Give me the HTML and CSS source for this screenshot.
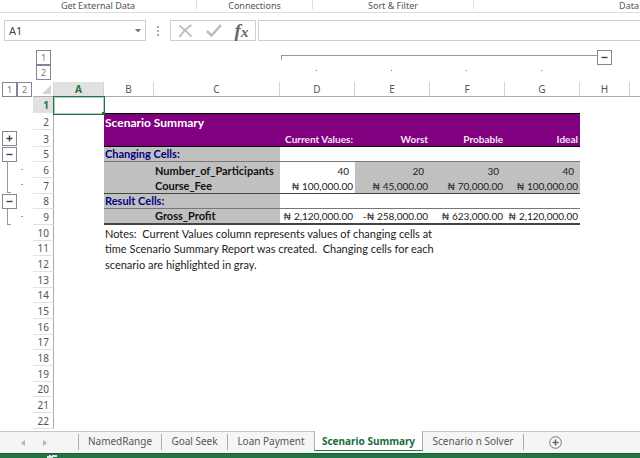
FILE: index.html
```html
<!DOCTYPE html>
<html lang="en">
<head>
<meta charset="utf-8">
<title>Scenario Summary</title>
<link rel="stylesheet" href="styles.css">
</head>
<body>
<div class="app">
  <header class="ribbon">
    <span class="group external">Get External Data</span>
    <span class="group connections">Connections</span>
    <span class="group sort">Sort &amp; Filter</span>
    <span class="group tools">Data</span>
  </header>

  <div class="formula-bar">
    <div class="name-box">
      <input type="text" value="A1" aria-label="Name box">
      <svg width="6" height="4" viewBox="0 0 6 4"><path d="M0 0h6L3 3.5z" fill="#777"/></svg>
    </div>
    <svg class="grip" width="2" height="10" viewBox="0 0 2 10"><path d="M0 0h2v2H0zM0 4h2v2H0zM0 8h2v2H0z" fill="#aaa"/></svg>
    <div class="entry-buttons">
      <button type="button" aria-label="Cancel"><svg width="15" height="14" viewBox="0 0 15 14"><path d="M1 1.5C5 4 10 9 13.500 12.500M13.500 1C9 4 4 9 1.500 13" fill="none" stroke="#bdbdbd" stroke-width="2"/></svg></button>
      <button type="button" aria-label="Enter"><svg width="16" height="13" viewBox="0 0 16 13"><path d="M1 7l4.500 4.500L15 1" fill="none" stroke="#bdbdbd" stroke-width="2.600"/></svg></button>
      <button type="button" class="fx" aria-label="Insert function"><i>f</i><i class="x">x</i></button>
    </div>
    <input class="formula" type="text" aria-label="Formula">
  </div>

  <main class="sheet">
    <div class="row-outline">
      <div class="levels"><button type="button">1</button><button type="button">2</button></div>
      <div class="groups">
        <button type="button" class="toggle" aria-label="Expand row 4"><svg width="9" height="9" viewBox="0 0 9 9"><path d="M1.500 4.500h6M4.500 1.500v6" stroke="#444" stroke-width="1.400"/></svg></button>
        <button type="button" class="toggle" aria-label="Collapse rows 6 to 7"><svg width="9" height="9" viewBox="0 0 9 9"><path d="M1.500 4.500h6" stroke="#444" stroke-width="1.400"/></svg></button>
        <div class="bracket two"><i></i><i></i></div>
        <button type="button" class="toggle" aria-label="Collapse row 9"><svg width="9" height="9" viewBox="0 0 9 9"><path d="M1.500 4.500h6" stroke="#444" stroke-width="1.400"/></svg></button>
        <div class="bracket"><i></i></div>
      </div>
    </div>

    <div class="grid-area">
      <div class="column-outline">
        <div class="levels stacked"><button type="button">1</button><button type="button">2</button></div>
        <div class="span"><span class="line"></span><button type="button" class="toggle" aria-label="Collapse columns D to G"><svg width="9" height="9" viewBox="0 0 9 9"><path d="M1.500 4.500h6" stroke="#444" stroke-width="1.400"/></svg></button></div>
        <i class="dot d"></i><i class="dot e"></i><i class="dot f"></i><i class="dot g"></i>
      </div>

      <table class="cells">
        <colgroup><col class="head"><col class="small"><col class="small"><col class="wide"><col class="value"><col class="value"><col class="value"><col class="value"><col class="small"><col></colgroup>
        <thead>
          <tr><th class="corner"><svg width="9" height="9" viewBox="0 0 9 9"><path d="M9 0v9H0z" fill="#d4d4d4"/></svg></th><th class="active">A</th><th>B</th><th>C</th><th>D</th><th>E</th><th>F</th><th>G</th><th>H</th><th></th></tr>
        </thead>
        <tbody>
          <tr><th class="active">1</th><td class="selected"><span></span></td></tr>
          <tr class="tall title"><th>2</th><td></td><td colspan="2">Scenario Summary</td><td></td><td></td><td></td><td></td></tr>
          <tr class="tall heads"><th>3</th><td></td><td colspan="2"></td><td>Current Values:</td><td>Worst</td><td>Probable</td><td>Ideal</td></tr>
          <tr class="short section"><th>5</th><td></td><td colspan="2">Changing Cells:</td><td></td><td></td><td></td><td></td></tr>
          <tr class="data count"><th>6</th><td></td><td class="gray"></td><td class="label">Number_of_Participants</td><td>40</td><td class="gray">20</td><td class="gray">30</td><td class="gray">40</td></tr>
          <tr class="data end"><th>7</th><td></td><td class="gray"></td><td class="label">Course_Fee</td><td>₦ 100,000.00</td><td class="gray">₦ 45,000.00</td><td class="gray">₦ 70,000.00</td><td class="gray">₦ 100,000.00</td></tr>
          <tr class="short section"><th>8</th><td></td><td colspan="2">Result Cells:</td><td></td><td></td><td></td><td></td></tr>
          <tr class="data last"><th>9</th><td></td><td class="gray"></td><td class="label">Gross_Profit</td><td>₦ 2,120,000.00</td><td>-₦ 258,000.00</td><td>₦ 623,000.00</td><td>₦ 2,120,000.00</td></tr>
          <tr class="note"><th>10</th><td></td><td colspan="5">Notes:&nbsp; Current Values column represents values of changing cells at</td></tr>
          <tr class="note short"><th>11</th><td></td><td colspan="5">time Scenario Summary Report was created.&nbsp; Changing cells for each</td></tr>
          <tr class="note"><th>12</th><td></td><td colspan="5">scenario are highlighted in gray.</td></tr>
          <tr><th>13</th></tr>
          <tr class="short"><th>14</th></tr>
          <tr><th>15</th></tr>
          <tr><th>16</th></tr>
          <tr class="short"><th>17</th></tr>
          <tr><th>18</th></tr>
          <tr><th>19</th></tr>
          <tr class="short"><th>20</th></tr>
          <tr><th>21</th></tr>
          <tr><th>22</th></tr>
        </tbody>
      </table>
    </div>
  </main>

  <nav class="tabs">
    <div class="arrows">
      <button type="button" aria-label="Previous sheet"><svg width="4" height="6" viewBox="0 0 4 6"><path d="M4 0v6L0 3z" fill="#b5b5b5"/></svg></button>
      <button type="button" aria-label="Next sheet"><svg width="4" height="6" viewBox="0 0 4 6"><path d="M0 0v6l4-3z" fill="#b5b5b5"/></svg></button>
    </div>
    <a class="named" href="#named">NamedRange</a>
    <a class="goal" href="#goal">Goal Seek</a>
    <a class="loan" href="#loan">Loan Payment</a>
    <a class="current" href="#summary">Scenario Summary</a>
    <a class="solver" href="#solver">Scenario n Solver</a>
    <button type="button" class="add" aria-label="New sheet"><svg width="13" height="13" viewBox="0 0 13 13"><circle cx="6.500" cy="6.500" r="5.800" fill="none" stroke="#777"/><path d="M3.500 6.500h6M6.500 3.500v6" stroke="#666" stroke-width="1.500"/></svg></button>
  </nav>
  <footer class="status"><svg width="10" height="3" viewBox="0 0 10 3"><path d="M0 3V1h2V0h2v1h1V0h5v2H6v1z" fill="#dcebe2"/></svg></footer>
</div>
</body>
</html>
```
FILE: styles.css
```css
* { box-sizing: border-box; }
body { margin: 0; background: #fff; color: #444; font: 11px/15px "Noto Sans", sans-serif; overflow: hidden; }
button { margin: 0; padding: 0; border: 0; background: none; font: inherit; color: inherit; display: flex; align-items: center; justify-content: center; }
input { font: inherit; color: inherit; border: 0; outline: 0; background: none; padding: 0; }
svg { display: block; flex: none; }

.app { display: flex; flex-direction: column; height: 100vh; }

.ribbon { display: grid; grid-template-columns: 197px 116px 161px 1fr; height: 13px; border-bottom: 1px solid #dcdcdc; font-size: 9px; line-height: 11px; color: #555; flex: none; }
.group { text-align: center; border-right: 1px solid #dcdcdc; height: 9px; white-space: nowrap; }
.tools { text-align: right; border: 0; padding-right: 1px; }

.formula-bar { display: flex; align-items: center; padding-left: 4px; margin-top: 7px; height: 21px; flex: none; }
.name-box { display: flex; align-items: center; width: 142px; height: 21px; border: 1px solid #cfcfcf; padding: 0 4px; }
.name-box input { flex: 1; min-width: 0; }
.grip { margin: 0 11px; }
.entry-buttons { display: flex; align-items: center; justify-content: space-around; width: 86px; height: 21px; border: 1px solid #cfcfcf; }
.fx { font: bold 19px/19px "Liberation Serif", serif; color: #666; }
.fx .x { font-size: 15px; padding-top: 4px; }
.formula { flex: 1; min-width: 0; height: 21px; margin-left: 2px; border: 1px solid #cfcfcf; border-right: 0; }

.sheet { display: flex; flex: 1; min-height: 0; padding-top: 9px; }
.row-outline { width: 33px; padding: 32px 0 0 2px; flex: none; }
.levels { display: flex; font-size: 9px; color: #777; }
.levels button, .toggle { width: 15px; height: 15px; border: 1px solid #7f8796; }
.stacked { flex-direction: column; grid-row: 1 / 3; padding-left: 3px; }
.groups { padding-top: 34px; display: flex; flex-direction: column; }
.groups .toggle + .toggle { margin-top: 1px; }
.bracket { display: flex; flex-direction: column; margin: 0 0 1px 5px; height: 16px; width: 4px; border: 1px solid #999; border-width: 0 0 1px 1px; }
.bracket.two { height: 31px; }
.bracket i { display: block; flex: 1; width: 2px; background: radial-gradient(circle, #999 1px, transparent 1px); margin-left: 13px; }

.grid-area { flex: 1; min-width: 0; }
.column-outline { display: grid; grid-template-columns: 246px 75px 75px 75px 75px 50px 1fr; grid-template-rows: 15px 17px; }
.stacked { grid-column: 1; }
.span { grid-column: 2 / 7; grid-row: 1; display: flex; padding: 0 17px 0 2px; }
.line { flex: 1; height: 5px; margin-top: 5px; border: 1px solid #999; border-width: 1px 0 0 1px; }
.dot { grid-row: 2; width: 1px; height: 1px; background: #777; justify-self: center; margin-top: 5px; }
.d { grid-column: 2; } .e { grid-column: 3; } .f { grid-column: 4; } .g { grid-column: 5; }

.cells { width: 100%; table-layout: fixed; border-collapse: separate; border-spacing: 0; font-family: Lato, "Noto Sans", sans-serif; color: #222; }
.head { width: 21px; } .small { width: 50px; } .wide { width: 126px; } .value { width: 75px; }
th, td { padding: 0; line-height: 14px; white-space: nowrap; vertical-align: bottom; }
th { font: 10px/14px "Noto Sans", sans-serif; color: #555; }
thead th { height: 15px; border-right: 1px solid #d4d4d4; border-bottom: 1px solid #ababab; }
thead th:last-child { border-right: 0; }
thead .corner svg { margin: 3px 2px 2px auto; }
tbody tr { height: 16px; }
tbody .short { height: 15px; }
tbody .tall { height: 17px; }
tbody th { text-align: right; padding-right: 4px; border-right: 1px solid #ababab; border-bottom: 1px solid #e1e1e1; }
th.active { background: #e1e1e1; color: #217346; font-weight: bold; }
.selected { position: relative; }
.selected span { position: absolute; inset: -1px -1px -2px -1px; border: 1px solid #217346; outline: 1px solid rgba(33, 115, 70, .35); outline-offset: -2px; }
.selected span::after { content: ""; position: absolute; right: -1px; bottom: -1px; width: 3px; height: 3px; background: #217346; }

.title td:nth-child(n+3), .heads td:nth-child(n+3) { background: #800080; color: #fff; font-weight: bold; }
.title td:nth-child(n+3) { border-top: 1px solid #000; padding-left: 1px; font-size: 12px; }
.heads td:nth-child(n+3) { border-bottom: 1px solid #000; text-align: right; padding-right: 2px; font-size: 10px; color: #f3e6f3; }
.section td:nth-child(n+3) { border-bottom: 1px solid #777; }
.section td:nth-child(3) { background: #c0c0c0; color: #000080; font-weight: bold; padding-left: 1px; }
.data td { text-align: right; padding-right: 2px; font-size: 10px; }
.data .label { background: #c0c0c0; text-align: left; font-size: 11px; font-weight: bold; color: #111; padding-left: 1px; }
.data .gray { background: #c0c0c0; }
.count td:not(.label) { padding-right: 6px; }
.end td:nth-child(n+3) { border-bottom: 1px solid #444; }
.last td:nth-child(n+3) { border-bottom: 2px solid #444; }
.note td { padding-left: 1px; }

.tabs { display: flex; height: 22px; background: #f5f5f5; border-top: 1px solid #c6c6c6; font-size: 10px; flex: none; }
.arrows { display: flex; width: 78px; gap: 18px; padding-left: 21px; flex: none; }
.tabs a { color: #555; text-decoration: none; text-align: center; line-height: 15px; margin: 2px 0 3px; border-left: 1px solid #ababab; white-space: nowrap; }
.named { width: 83px; } .goal { width: 66px; } .loan { width: 87px; } .solver { width: 101px; border-right: 1px solid #ababab; }
.tabs .current { width: 109px; margin: -1px 0 2px; padding-top: 3px; background: #fff; border: 1px solid #ababab; border-width: 0 1px 1px; border-bottom-color: #217346; color: #1b6b3e; font-weight: bold; }
.tabs .solver { border-left: 0; }
.add { margin-left: 25px; }
.status { height: 5px; background: #217346; border-top: 1px solid #185c37; flex: none; padding: 1px 0 0 47px; }
```
